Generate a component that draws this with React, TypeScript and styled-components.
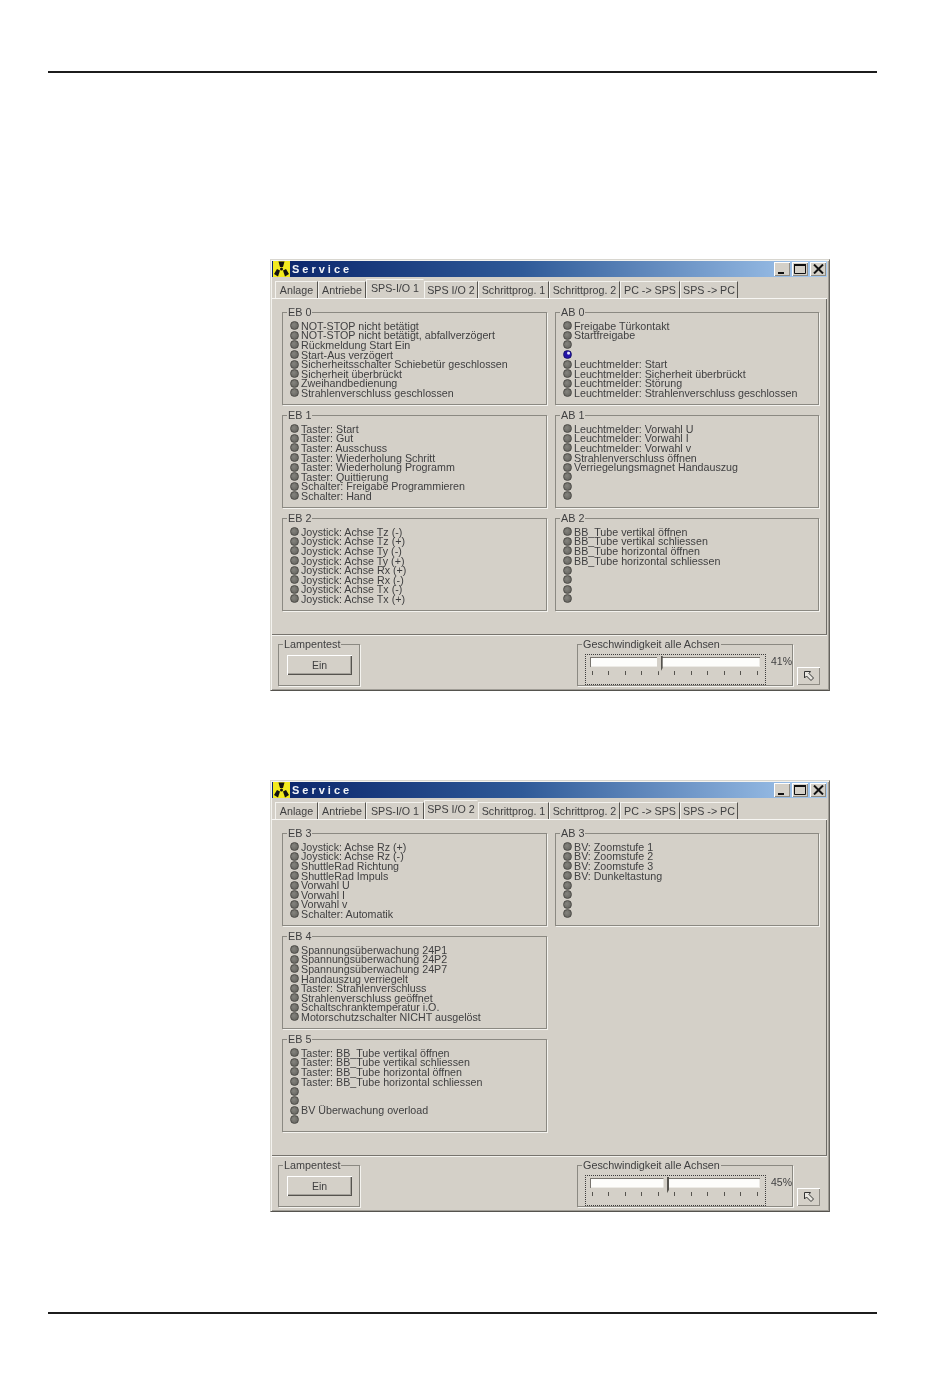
import * as React from 'react'
import styled, { createGlobalStyle } from 'styled-components'

const GlobalStyle = createGlobalStyle`
    html, body { margin: 0; padding: 0; background: #fff; }
    body { font-family: "Liberation Sans", Arial, sans-serif; }
`

// ---------------------------------------- [Page] ----------------------------------------
const Page = styled.div`
    box-sizing: border-box;
    width: 950px;
    height: 1387px;
    padding-top: 71px;
    display: flex;
    flex-direction: column;
`

const Rule = styled.hr`
    width: 829px;
    height: 2px;
    margin: 0 0 0 48px;
    border: 0;
    background: #1c1c1c;
`

const Windows = styled.div`
    display: flex;
    flex-direction: column;
    gap: 89px;
    margin: 186px 0 100px 270px;
`

// ---------------------------------------- [Window] ----------------------------------------
const Win = styled.div`
    box-sizing: border-box;
    width: 560px;
    height: 432px;
    display: flex;
    flex-direction: column;
    background: #d4d0c8;
    border: 1px solid;
    border-color: #d8d6cf #66645f #55534e #d8d6cf;
    box-shadow: inset 1px 1px 0 #f4f3ef, inset -1px -1px 0 #a09d96;
    padding: 1px 2px 1px 1px;
    filter: blur(0.35px);
`

const TitleBar = styled.div`
    height: 16px;
    flex: none;
    display: flex;
    align-items: center;
    background: linear-gradient(90deg, #0a246a 0%, #2f5a98 45%, #a6caf0 100%);
    padding-left: 1px;
`

const TitleText = styled.span`
    margin-left: 2px;
    color: #f2f4f8;
    font-size: 11px;
    font-weight: bold;
    letter-spacing: 3px;
`

const Controls = styled.div`
    margin-left: auto;
    display: flex;
    gap: 2px;
    padding-right: 1px;
`

const ControlButton = styled.div`
    width: 16px;
    height: 14px;
    display: flex;
    align-items: center;
    justify-content: center;
    background: #d4d0c8;
    box-shadow: inset 1px 1px 0 #fff, inset -1px -1px 0 #8f8c85;
`

const AppIcon = () => (
    <svg width="17" height="16" viewBox="0 0 17 16">
        <rect width="17" height="16" fill="#f2ea1e" />
        <path d="M5.5 0.5 L11.5 0.5 L10 6 L7 6 Z" fill="#111" />
        <path d="M1 13 L4 8 L7 9.5 L5 15.5 Z" fill="#111" />
        <path d="M16 13 L13 8 L10 9.5 L12 15.5 Z" fill="#111" />
        <circle cx="8.5" cy="8" r="1.5" fill="#111" />
    </svg>
)

const MinIcon = () => (
    <svg width="10" height="10" viewBox="0 0 10 10"><rect x="1" y="8" width="6" height="2" fill="#111" /></svg>
)
const MaxIcon = () => (
    <svg width="12" height="10" viewBox="0 0 12 10"><path d="M0.5 1.5 H11.5 V9.5 H0.5 Z" fill="none" stroke="#111" /><rect y="0" width="12" height="2" fill="#111" /></svg>
)
const CloseIcon = () => (
    <svg width="11" height="10" viewBox="0 0 11 10"><path d="M1 0.5 L10 9.5 M10 0.5 L1 9.5" stroke="#111" strokeWidth="2" /></svg>
)

// ---------------------------------------- [Tabs] ----------------------------------------
const TabStrip = styled.div`
    flex: none;
    height: 19px;
    margin-top: 2px;
    padding-left: 3px;
    display: flex;
    align-items: flex-end;
    border-bottom: 1px solid #f7f6f3;
`

const Tab = styled.div<{ $w: number; $active?: boolean }>`
    box-sizing: border-box;
    width: ${p => p.$w}px;
    height: ${p => (p.$active ? 19 : 17)}px;
    display: flex;
    align-items: center;
    justify-content: center;
    font-size: 10.7px;
    color: #3f3f40;
    white-space: nowrap;
    border-top: 1px solid #f4f3ef;
    border-left: 1px solid #f4f3ef;
    border-right: 1px solid ${p => (p.$active ? '#d4d0c8' : '#55534e')};
    padding-bottom: ${p => (p.$active ? 3 : 0)}px;
`

// ---------------------------------------- [Panel] ----------------------------------------
const Pane = styled.div`
    box-sizing: border-box;
    flex: none;
    height: 336px;
    padding: 13px 8px 0 10px;
    border-right: 1px solid #6f6d68;
    border-bottom: 1px solid #77746e;
`

const GroupGrid = styled.div`
    display: grid;
    grid-template-columns: 265px 264px;
    grid-template-rows: repeat(3, 93px);
    column-gap: 8px;
    row-gap: 10px;
`

const Group = styled.div<{ $column: number }>`
    position: relative;
    box-sizing: border-box;
    grid-column: ${p => p.$column};
    border: 1px solid #8b8982;
    box-shadow: 1px 1px 0 #f4f3ef;
    padding: 8px 0 0 7px;
`

const Legend = styled.span`
    position: absolute;
    top: -7px;
    left: 4px;
    padding: 0 1px;
    background: #d4d0c8;
    font-size: 10.8px;
    line-height: 12px;
    color: #3f3f40;
    white-space: nowrap;
`

const SignalRow = styled.div`
    height: 9.6px;
    display: flex;
    align-items: center;
    font-size: 10.7px;
    color: #3f3f40;
    white-space: nowrap;
`

const Led = styled.i<{ $on?: boolean }>`
    box-sizing: border-box;
    flex: none;
    width: 9px;
    height: 9px;
    margin-right: 2px;
    border-radius: 50%;
    border: 1px solid ${p => (p.$on ? '#14106a' : '#4c4b47')};
    background: ${p => (p.$on
        ? 'radial-gradient(circle at 65% 30%, #e8e8ff 0 14%, #2414a8 30%)'
        : 'radial-gradient(circle at 40% 40%, #85847e, #5f5e59)')};
`

// ---------------------------------------- [Footer] ----------------------------------------
const Footer = styled.div`
    flex: 1;
    display: flex;
    align-items: flex-start;
    padding: 8px 7px 0 6px;
    border-top: 1px solid #f4f3ef;
`

const FrameBox = styled.div<{ $w: number }>`
    position: relative;
    box-sizing: border-box;
    width: ${p => p.$w}px;
    height: 42px;
    flex: none;
    border: 1px solid #8b8982;
    box-shadow: 1px 1px 0 #f4f3ef;
`

const LampGroup = styled(FrameBox)`
    padding: 10px 0 0 8px;
`

const SpeedGroup = styled(FrameBox)`
    margin-left: auto;
    padding: 9px 0 0 7px;
    display: flex;
`

const LampButton = styled.div`
    box-sizing: border-box;
    width: 65px;
    height: 20px;
    display: flex;
    align-items: center;
    justify-content: center;
    font-size: 10.5px;
    color: #3f3f40;
    background: #d4d0c8;
    box-shadow: inset 1px 1px 0 #fff, inset -1px -1px 0 #55534e, inset -2px -2px 0 #a5a29b;
`

const SliderFrame = styled.div`
    box-sizing: border-box;
    width: 182px;
    height: 31px;
    border: 1px dotted #3c3c3c;
    padding: 2px 5px 0 4px;
`

const Track = styled.div`
    position: relative;
    height: 10px;
    background: #fdfdfb;
    box-shadow: inset 1px 1px 0 #77746e, inset -1px -1px 0 #eceae5;
`

const Thumb = styled.div`
    position: absolute;
    top: -1px;
    width: 6px;
    height: 17px;
    margin-left: -3px;
    background: linear-gradient(90deg, #d4d0c8 0 4px, #55534e 4px);
    clip-path: polygon(0 0, 100% 0, 100% 70%, 50% 100%, 0 70%);
`

const Ticks = styled.div`
    display: flex;
    justify-content: space-between;
    margin: 4px 2px 0 2px;
`

const Tick = styled.i`
    width: 1px;
    height: 4px;
    background: #55534e;
`

const Percent = styled.span`
    margin: 1px 0 0 5px;
    line-height: 12px;
    font-size: 10.5px;
    color: #3f3f40;
`

const CursorButton = styled.div`
    box-sizing: border-box;
    flex: none;
    width: 23px;
    height: 18px;
    margin: 23px 0 0 4px;
    display: flex;
    align-items: center;
    justify-content: center;
    background: #d4d0c8;
    box-shadow: inset 1px 1px 0 #fff, inset -1px -1px 0 #8f8c85;
`

const CursorIcon = () => (
    <svg width="12" height="12" viewBox="0 0 12 12">
        <path d="M1.5 1.5 H7.5 L6 3.5 L10.5 8 L8 10.5 L3.5 6 L1.5 8 Z" fill="#e8e6e0" stroke="#333" />
    </svg>
)

// ---------------------------------------- [Data] ----------------------------------------
interface Signal { label: string; on?: boolean }
interface GroupData { title: string; signals: Signal[]; column: number }

const sig = (...labels: string[]): Signal[] => labels.map(label => ({ label }))

const TABS = [
    { label: 'Anlage', w: 43 },
    { label: 'Antriebe', w: 48 },
    { label: 'SPS-I/O 1', w: 58 },
    { label: 'SPS I/O 2', w: 54 },
    { label: 'Schrittprog. 1', w: 71 },
    { label: 'Schrittprog. 2', w: 71 },
    { label: 'PC -> SPS', w: 60 },
    { label: 'SPS -> PC', w: 58 },
]

const IO1: GroupData[] = [
    { title: 'EB 0', column: 1, signals: sig('NOT-STOP nicht betätigt', 'NOT-STOP nicht betätigt, abfallverzögert', 'Rückmeldung Start Ein', 'Start-Aus verzögert', 'Sicherheitsschalter Schiebetür geschlossen', 'Sicherheit überbrückt', 'Zweihandbedienung', 'Strahlenverschluss geschlossen') },
    { title: 'AB 0', column: 2, signals: [
        { label: 'Freigabe Türkontakt' }, { label: 'Startfreigabe' }, { label: '' }, { label: '', on: true },
        { label: 'Leuchtmelder: Start' }, { label: 'Leuchtmelder: Sicherheit überbrückt' }, { label: 'Leuchtmelder: Störung' }, { label: 'Leuchtmelder: Strahlenverschluss geschlossen' },
    ] },
    { title: 'EB 1', column: 1, signals: sig('Taster: Start', 'Taster: Gut', 'Taster: Ausschuss', 'Taster: Wiederholung Schritt', 'Taster: Wiederholung Programm', 'Taster: Quittierung', 'Schalter: Freigabe Programmieren', 'Schalter: Hand') },
    { title: 'AB 1', column: 2, signals: sig('Leuchtmelder: Vorwahl U', 'Leuchtmelder: Vorwahl I', 'Leuchtmelder: Vorwahl v', 'Strahlenverschluss öffnen', 'Verriegelungsmagnet Handauszug', '', '', '') },
    { title: 'EB 2', column: 1, signals: sig('Joystick: Achse Tz (-)', 'Joystick: Achse Tz (+)', 'Joystick: Achse Ty (-)', 'Joystick: Achse Ty (+)', 'Joystick: Achse Rx (+)', 'Joystick: Achse Rx (-)', 'Joystick: Achse Tx (-)', 'Joystick: Achse Tx (+)') },
    { title: 'AB 2', column: 2, signals: sig('BB_Tube vertikal öffnen', 'BB_Tube vertikal schliessen', 'BB_Tube horizontal öffnen', 'BB_Tube horizontal schliessen', '', '', '', '') },
]

const IO2: GroupData[] = [
    { title: 'EB 3', column: 1, signals: sig('Joystick: Achse Rz (+)', 'Joystick: Achse Rz (-)', 'ShuttleRad Richtung', 'ShuttleRad Impuls', 'Vorwahl U', 'Vorwahl I', 'Vorwahl v', 'Schalter: Automatik') },
    { title: 'AB 3', column: 2, signals: sig('BV: Zoomstufe 1', 'BV: Zoomstufe 2', 'BV: Zoomstufe 3', 'BV: Dunkeltastung', '', '', '', '') },
    { title: 'EB 4', column: 1, signals: sig('Spannungsüberwachung 24P1', 'Spannungsüberwachung 24P2', 'Spannungsüberwachung 24P7', 'Handauszug verriegelt', 'Taster: Strahlenverschluss', 'Strahlenverschluss geöffnet', 'Schaltschranktemperatur i.O.', 'Motorschutzschalter NICHT ausgelöst') },
    { title: 'EB 5', column: 1, signals: sig('Taster: BB_Tube vertikal öffnen', 'Taster: BB_Tube vertikal schliessen', 'Taster: BB_Tube horizontal öffnen', 'Taster: BB_Tube horizontal schliessen', '', '', 'BV Überwachung overload', '') },
]

// ---------------------------------------- [Service window] ----------------------------------------
const ServiceWindow = (props: { activeTab: number; groups: GroupData[]; speed: number }) => (
    <Win>
        <TitleBar>
            <AppIcon />
            <TitleText>Service</TitleText>
            <Controls>
                <ControlButton><MinIcon /></ControlButton>
                <ControlButton><MaxIcon /></ControlButton>
                <ControlButton><CloseIcon /></ControlButton>
            </Controls>
        </TitleBar>
        <TabStrip>
            {TABS.map((tab, i) => <Tab key={tab.label} $w={tab.w} $active={i === props.activeTab}>{tab.label}</Tab>)}
        </TabStrip>
        <Pane>
            <GroupGrid>
                {props.groups.map(group => (
                    <Group key={group.title} $column={group.column}>
                        <Legend>{group.title}</Legend>
                        {group.signals.map((signal, i) => (
                            <SignalRow key={i}><Led $on={signal.on} />{signal.label}</SignalRow>
                        ))}
                    </Group>
                ))}
            </GroupGrid>
        </Pane>
        <Footer>
            <LampGroup $w={82}>
                <Legend>Lampentest</Legend>
                <LampButton>Ein</LampButton>
            </LampGroup>
            <SpeedGroup $w={216}>
                <Legend>Geschwindigkeit alle Achsen</Legend>
                <SliderFrame>
                    <Track><Thumb style={{ left: `${props.speed}%` }} /></Track>
                    <Ticks>{Array.from({ length: 11 }, (_, i) => <Tick key={i} />)}</Ticks>
                </SliderFrame>
                <Percent>{props.speed}%</Percent>
            </SpeedGroup>
            <CursorButton><CursorIcon /></CursorButton>
        </Footer>
    </Win>
)

export default function App() {
    return (
        <Page>
            <GlobalStyle />
            <Rule />
            <Windows>
                <ServiceWindow activeTab={2} groups={IO1} speed={41} />
                <ServiceWindow activeTab={3} groups={IO2} speed={45} />
            </Windows>
            <Rule />
        </Page>
    )
}
